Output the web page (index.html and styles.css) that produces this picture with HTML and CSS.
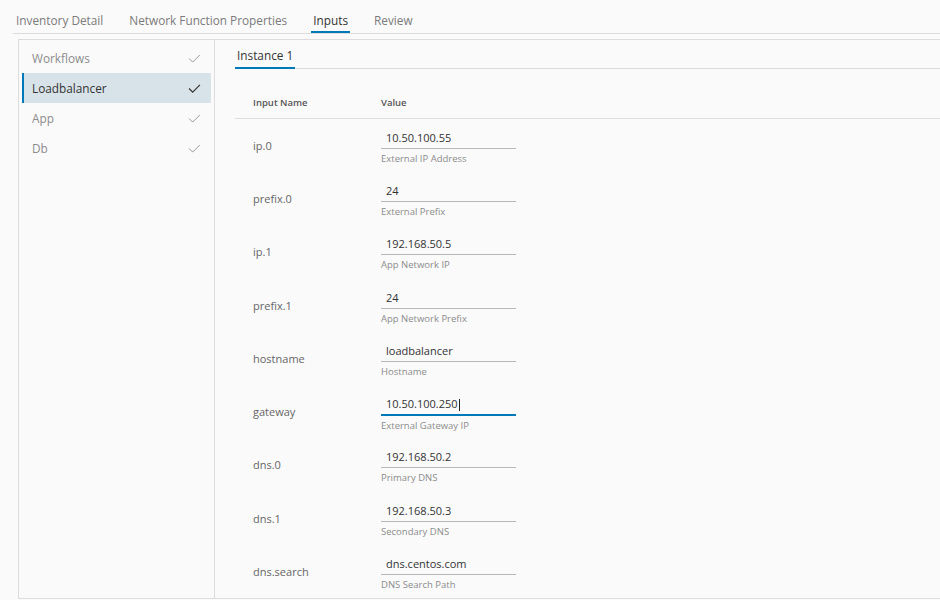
FILE: index.html
```html
<!DOCTYPE html>
<html>
<head>
<meta charset="utf-8">
<link rel="stylesheet" href="styles.css">
</head>
<body>
<div class="page">
  <nav class="tabs">
    <span class="tab">Inventory Detail</span>
    <span class="tab">Network Function Properties</span>
    <span class="tab active">Inputs</span>
    <span class="tab">Review</span>
  </nav>
  <div class="wizard">
    <aside class="steps">
      <div class="step"><span>Workflows</span><svg class="check" viewBox="0 0 14 10"><path d="M1 5 L5 9 L13 1"/></svg></div>
      <div class="step selected"><span>Loadbalancer</span><svg class="check" viewBox="0 0 14 10"><path d="M1 5 L5 9 L13 1"/></svg></div>
      <div class="step"><span>App</span><svg class="check" viewBox="0 0 14 10"><path d="M1 5 L5 9 L13 1"/></svg></div>
      <div class="step"><span>Db</span><svg class="check" viewBox="0 0 14 10"><path d="M1 5 L5 9 L13 1"/></svg></div>
    </aside>
    <section class="content">
      <div class="inst-tabs"><span class="inst-tab">Instance 1</span></div>
      <div class="grid-head"><span>Input Name</span><span>Value</span></div>
      <div class="row"><span class="name">ip.0</span><div class="field"><div class="input">10.50.100.55</div><div class="help">External IP Address</div></div></div>
      <div class="row"><span class="name">prefix.0</span><div class="field"><div class="input">24</div><div class="help">External Prefix</div></div></div>
      <div class="row"><span class="name">ip.1</span><div class="field"><div class="input">192.168.50.5</div><div class="help">App Network IP</div></div></div>
      <div class="row"><span class="name">prefix.1</span><div class="field"><div class="input">24</div><div class="help">App Network Prefix</div></div></div>
      <div class="row"><span class="name">hostname</span><div class="field"><div class="input">loadbalancer</div><div class="help">Hostname</div></div></div>
      <div class="row"><span class="name">gateway</span><div class="field"><div class="input focus">10.50.100.250<span class="caret"></span></div><div class="help">External Gateway IP</div></div></div>
      <div class="row"><span class="name">dns.0</span><div class="field"><div class="input">192.168.50.2</div><div class="help">Primary DNS</div></div></div>
      <div class="row"><span class="name">dns.1</span><div class="field"><div class="input">192.168.50.3</div><div class="help">Secondary DNS</div></div></div>
      <div class="row"><span class="name">dns.search</span><div class="field"><div class="input">dns.centos.com</div><div class="help">DNS Search Path</div></div></div>
    </section>
  </div>
</div>
</body>
</html>
```
FILE: styles.css
```css
* { box-sizing: border-box; }
html, body { margin: 0; padding: 0; background: #fafafa; }
body { font-family: "Open Sans", "Liberation Sans", sans-serif; color: #333; width: 940px; height: 600px; overflow: hidden; }
.page { padding-left: 13px; }
.tabs { display: flex; gap: 22px; height: 34px; border-bottom: 1px solid #dcdcdc; padding-left: 1px; }
.tab { display: flex; align-items: flex-end; height: 33px; padding: 0 2px 6px; font-size: 11.8px; line-height: 1; color: #7a7a7a; }
.tab.active { color: #333; border-bottom: 2px solid #0079b8; padding-bottom: 4px; }
.wizard { margin: 5px 0 0 5px; display: flex; height: 560px; border: 1px solid #dcdcdc; border-right: none; }
.steps { width: 196px; flex: none; border-right: 1px solid #dcdcdc; padding: 3px 3px 0 3px; }
.step { height: 30px; display: flex; align-items: center; justify-content: space-between; padding: 1px 10px 0 8px; font-size: 11.8px; color: #8c8c8c; border-left: 2px solid transparent; }
.step > span { margin-top: -2px; }
.step.selected { background: #d8e3e9; color: #333; border-left-color: #0079b8; }
.check { width: 13px; height: 9px; fill: none; stroke: #9a9a9a; stroke-width: 1.1; }
.step.selected .check { stroke: #333; stroke-width: 1.3; }
.content { flex: 1; padding-left: 20px; }
.inst-tabs { height: 29px; border-bottom: 1px solid #dcdcdc; display: flex; align-items: flex-end; }
.inst-tab { font-size: 11.8px; line-height: 1; color: #333; padding: 0 2px 5px 2px; border-bottom: 2px solid #0079b8; margin-bottom: -1px; }
.grid-head { height: 50px; border-bottom: 1px solid #dcdcdc; display: flex; align-items: center; padding-top: 18px; font-size: 9.5px; font-weight: 600; color: #565656; }
.grid-head span:first-child { width: 146px; padding-left: 18px; }
.row { height: 53.3px; display: flex; align-items: center; }
.name { width: 146px; padding-left: 18px; font-size: 11px; color: #666; padding-bottom: 1px; }
.field { width: 135px; padding-top: 5px; }
.input { font-size: 11px; color: #333; padding: 0 5px 3px; border-bottom: 1px solid #b8b8b8; height: 17px; display: flex; align-items: flex-end; }
.input.focus { border-bottom: 2px solid #0079b8; height: 18px; }
.caret { display: inline-block; width: 1px; height: 12px; background: #222; margin-left: 1px; }
.help { font-size: 9.5px; color: #8c8c8c; margin-top: 3px; }
```
